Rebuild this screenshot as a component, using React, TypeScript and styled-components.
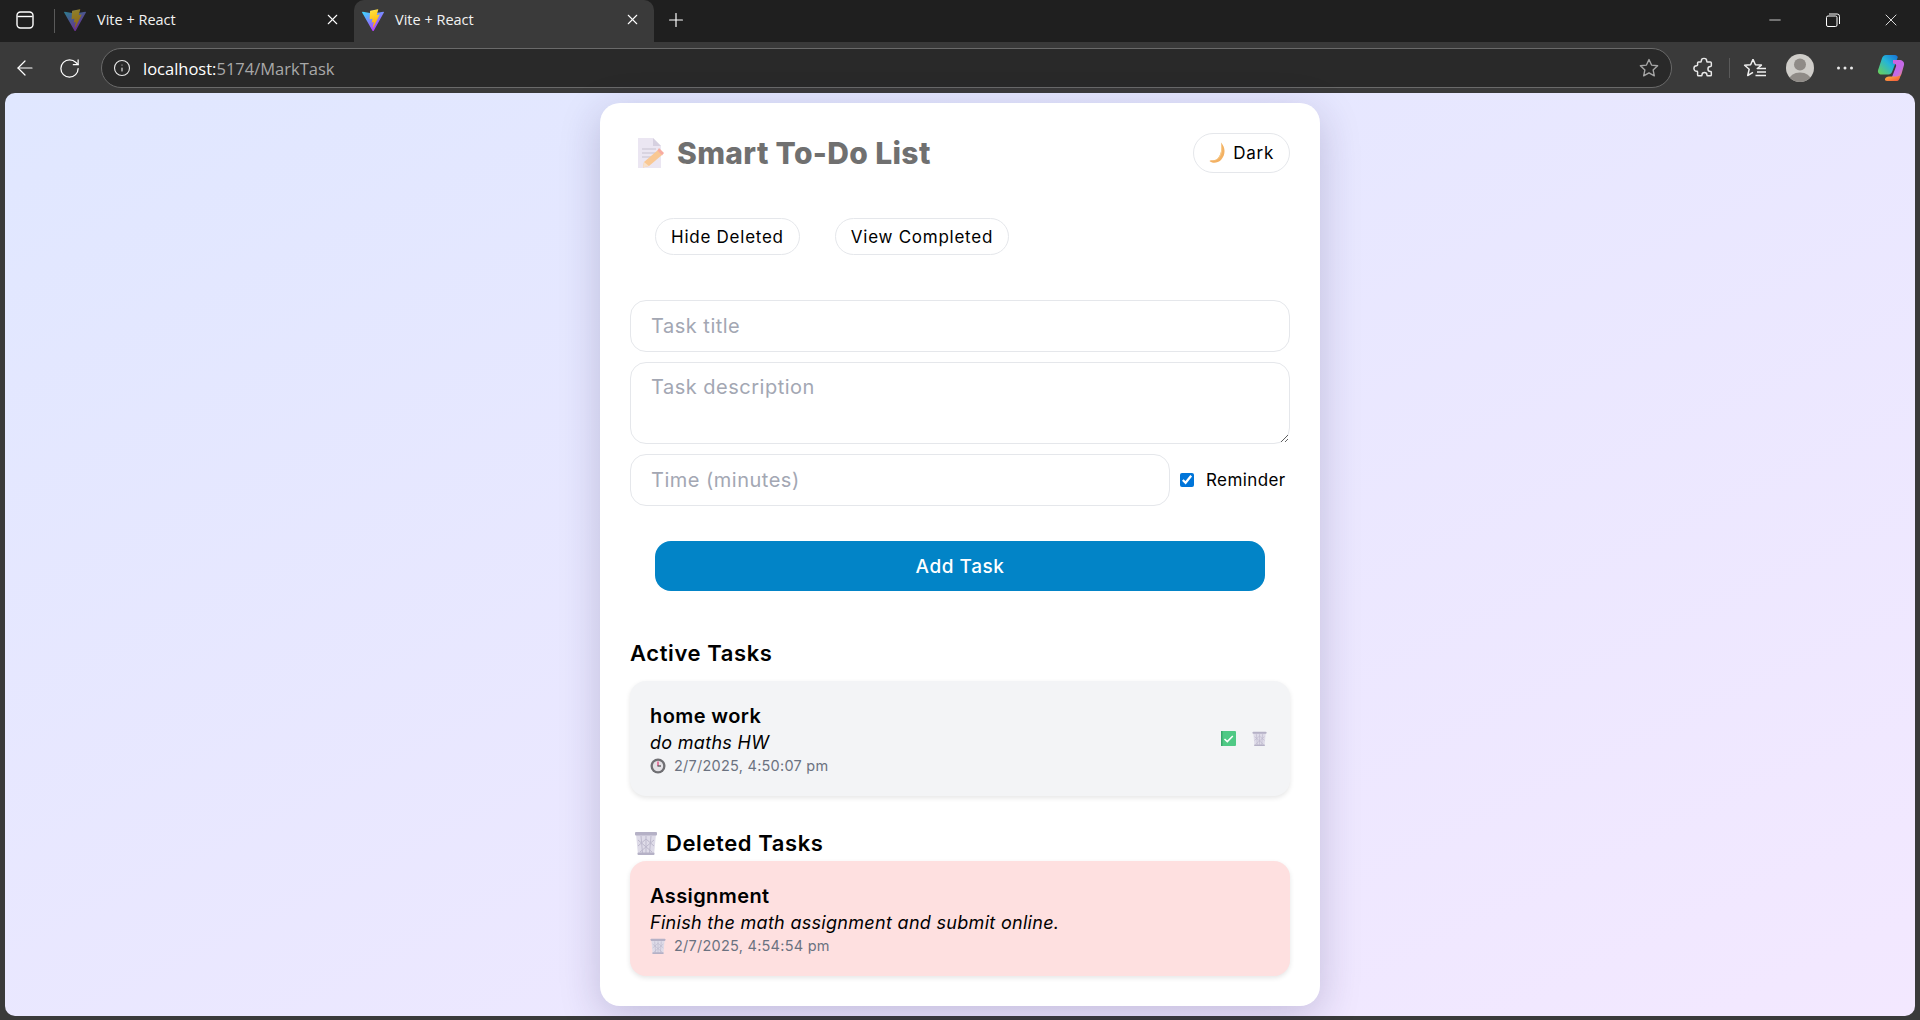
import React from "react";
import styled, { createGlobalStyle } from "styled-components";
import { ArrowLeft, RotateCw, Info, Plus, X, Minus } from "lucide-react";

const Global = createGlobalStyle`
  html, body { margin: 0; padding: 0; height: 100%; background: #3a3a3a; }
  #root { height: 100%; }
  * { box-sizing: border-box; }
`;

const UI = `"Inter", "Liberation Sans", sans-serif`;
const CHROME = `"Open Sans", "Liberation Sans", sans-serif`;

const Window = styled.div`
  width: 1920px;
  height: 1020px;
  display: flex;
  flex-direction: column;
  overflow: hidden;
  background: #3a3a3a;
  font-family: ${UI};
`;

const TabBar = styled.div`
  height: 42px;
  display: flex;
  align-items: stretch;
  background: #1f1f1f;
  color: #fff;
`;

const PanelButton = styled.div`
  width: 54px;
  display: flex;
  align-items: center;
  padding: 0 0 2px 15px;
`;

const Tab = styled.div<{ $active?: boolean }>`
  width: 300px;
  height: 42px;
  display: flex;
  align-items: center;
  gap: 11px;
  padding: 0 13px 3px ${(p) => (p.$active ? 8 : 9)}px;
  background: ${(p) => (p.$active ? "#3a3a3a" : "transparent")};
  border-radius: 10px 10px 0 0;
  border-left: ${(p) => (p.$active ? "none" : "1px solid transparent")};
`;

const Divider = styled.span`
  width: 1px;
  height: 24px;
  background: #5a5a5a;
  align-self: center;
  margin-right: -1px;
`;

const TabTitle = styled.span`
  flex: 1;
  font: 400 14.5px ${CHROME};
  color: #f2f2f2;
  white-space: nowrap;
`;

const NewTab = styled.div`
  width: 44px;
  display: flex;
  align-items: center;
  justify-content: center;
  padding-bottom: 2px;
`;

const Spacer = styled.div`
  flex: 1;
`;

const WindowButton = styled.div`
  width: 58px;
  display: flex;
  align-items: center;
  justify-content: center;
  padding-bottom: 2px;
`;

const Toolbar = styled.div`
  height: 51px;
  display: flex;
  align-items: center;
  padding: 1px 0 0 13px;
  background: #3a3a3a;
  color: #fff;
`;

const ToolIcon = styled.div<{ $w: number; $gap?: number }>`
  width: ${(p) => p.$w}px;
  height: 32px;
  margin-left: ${(p) => p.$gap ?? 0}px;
  display: flex;
  align-items: center;
  justify-content: center;
  flex: none;
`;

const Address = styled.div`
  width: 1571px;
  height: 40px;
  display: flex;
  align-items: center;
  padding: 0 11px 0 11px;
  background: #292929;
  border: 1px solid #6a6a6a;
  border-radius: 20px;
  flex: none;
`;

const Url = styled.div`
  flex: 1;
  margin-left: 12px;
  font: 400 16.5px ${CHROME};
  color: #a8a8a8;
  b {
    font-weight: 400;
    color: #fff;
  }
`;

const ToolSep = styled.span`
  width: 1px;
  height: 20px;
  background: #5a5a5a;
  margin: 0 8px;
  flex: none;
`;

const Viewport = styled.main`
  flex: 1;
  margin: 0 5px 4px;
  display: flex;
  justify-content: center;
  align-items: flex-start;
  padding-top: 10px;
  border-radius: 10px;
  background: linear-gradient(to bottom right, #e0e7ff, #f3e8ff);
`;

const Card = styled.section`
  width: 720px;
  padding: 30px;
  background: #fff;
  border-radius: 20px;
  box-shadow: 0 10px 40px rgba(40, 30, 90, 0.22);
`;

const Header = styled.header`
  height: 40px;
  display: flex;
  align-items: center;
  justify-content: space-between;
  margin-bottom: 45px;
`;

const Title = styled.h1`
  margin: 0;
  display: flex;
  align-items: center;
  gap: 12px;
  padding-left: 8px;
  font-size: 30px;
  font-weight: 800;
  color: #707070;
  letter-spacing: 0.35px;
`;

const Pill = styled.button<{ $h?: number }>`
  height: ${(p) => p.$h ?? 37}px;
  padding: 0 15px;
  display: inline-flex;
  align-items: center;
  gap: 7px;
  background: #fff;
  border: 1px solid #e5e7eb;
  border-radius: 20px;
  font: 400 17px ${UI};
  letter-spacing: 0.75px;
  color: #000;
`;

const Filters = styled.div`
  display: flex;
  gap: 35px;
  padding-left: 25px;
  margin-bottom: 45px;
`;

const Form = styled.form`
  display: flex;
  flex-direction: column;
  gap: 10px;
`;

const fieldCss = `
  display: block;
  width: 100%;
  padding: 0 20px;
  background: #fff;
  border: 1px solid #e5e7eb;
  border-radius: 16px;
  font: 400 20px ${UI};
  letter-spacing: 0.5px;
  color: #111;
  outline: none;
  &::placeholder { color: #a3a7b3; opacity: 1; }
`;

const Input = styled.input`
  ${fieldCss}
  height: 52px;
  flex: none;
`;

const TextArea = styled.textarea`
  ${fieldCss}
  height: 82px;
  padding-top: 12px;
  resize: vertical;
`;

const TimeRow = styled.div`
  display: flex;
  align-items: center;
  ${Input} {
    flex: 1;
    width: auto;
    min-width: 0;
  }
`;

const Reminder = styled.label`
  display: flex;
  align-items: center;
  flex: none;
  width: 120px;
  padding-left: 10px;
  font-size: 17px;
  letter-spacing: 0.4px;
  color: #000;
  white-space: nowrap;
`;

const Check = styled.input`
  width: 14px;
  height: 14px;
  margin: 0 12px 0 0;
  accent-color: #0075d9;
`;

const AddButton = styled.button`
  height: 50px;
  margin: 25px 25px 0;
  background: #0284c7;
  border: none;
  border-radius: 16px;
  color: #fff;
  font: 500 19px ${UI};
  letter-spacing: 0.55px;
`;

const SectionTitle = styled.h2<{ $top: number; $bottom: number }>`
  margin: ${(p) => p.$top}px 0 ${(p) => p.$bottom}px;
  height: 33px;
  display: flex;
  align-items: center;
  gap: 8px;
  padding-left: ${(p) => (p.$bottom < 5 ? 4 : 0)}px;
  font-size: 22px;
  font-weight: 600;
  letter-spacing: 0.6px;
  color: #000;
`;

const Task = styled.article<{ $deleted?: boolean }>`
  height: 115px;
  padding: 20px;
  display: flex;
  align-items: center;
  justify-content: space-between;
  background: ${(p) => (p.$deleted ? "#fee0e0" : "#f3f4f6")};
  border-radius: 16px;
  box-shadow: 0 2px 5px rgba(0, 0, 0, 0.1);
`;

const TaskText = styled.div`
  display: flex;
  flex-direction: column;
`;

const TaskName = styled.div`
  height: 30px;
  line-height: 30px;
  font-size: 20px;
  font-weight: 600;
  letter-spacing: 0.4px;
  color: #000;
`;

const TaskDesc = styled.div`
  height: 24px;
  line-height: 24px;
  font-size: 18px;
  font-style: italic;
  letter-spacing: 0.3px;
  color: #000;
`;

const TaskTime = styled.div`
  height: 21px;
  display: flex;
  align-items: center;
  gap: 8px;
  font-size: 14.5px;
  letter-spacing: 0.25px;
  color: #6b7280;
`;

const Actions = styled.div`
  display: flex;
  gap: 16px;
  padding-right: 3px;
`;

/* ---------- drawings ---------- */

const ViteLogo = ({ dim }: { dim?: boolean }) => (
  <svg width="22" height="22" viewBox="0 0 32 32" style={{ opacity: dim ? 0.5 : 1, flex: "none" }}>
    <defs>
      <linearGradient id="va" x1="0" y1="0.1" x2="0.6" y2="1">
        <stop offset="0" stopColor="#41d1ff" />
        <stop offset="1" stopColor="#bd34fe" />
      </linearGradient>
      <linearGradient id="vb" x1="0.4" y1="0" x2="0.6" y2="1">
        <stop offset="0" stopColor="#ffea83" />
        <stop offset="0.1" stopColor="#ffdd35" />
        <stop offset="1" stopColor="#ffa800" />
      </linearGradient>
    </defs>
    <path fill="url(#va)" d="M31.88 5.04 16.87 31.9c-.3.55-1.1.56-1.41.01L.17 5.04c-.34-.6.17-1.33.85-1.2l15.03 2.68c.1.02.2.02.29 0l14.71-2.68c.68-.12 1.2.6.83 1.2Z" />
    <path fill="url(#vb)" d="M23.2.38 12.1 2.55a.4.4 0 0 0-.32.37l-.68 11.52a.4.4 0 0 0 .49.41l3.09-.71a.4.4 0 0 1 .48.47l-.92 4.5a.4.4 0 0 0 .51.46l1.91-.58a.4.4 0 0 1 .51.46l-1.46 7.06c-.09.44.5.68.75.3l.16-.25 9.04-18.05a.4.4 0 0 0-.44-.58l-3.18.62a.4.4 0 0 1-.46-.51l2.08-7.2a.4.4 0 0 0-.46-.5Z" />
  </svg>
);

const PanelIcon = () => (
  <svg width="20" height="20" viewBox="0 0 20 20" fill="none" stroke="#fff" strokeWidth="1.4">
    <rect x="2" y="2" width="16" height="16" rx="3.5" />
    <path d="M2.5 6.5h15" />
  </svg>
);

const RestoreIcon = () => (
  <svg width="14" height="14" viewBox="0 0 14 14" fill="none" stroke="#fff" strokeWidth="1">
    <rect x="0.5" y="3" width="10.5" height="10.5" rx="1.5" />
    <path d="M3 1h8.2A2.3 2.3 0 0 1 13.5 3.3V11" />
  </svg>
);

const StarIcon = () => (
  <svg width="22" height="22" viewBox="0 0 24 24" fill="none" stroke="#a6a6a6" strokeWidth="1.5" strokeLinejoin="round" style={{ flex: "none" }}>
    <path d="m12 2.800 2.800 6 6.600.800-4.900 4.500 1.300 6.500-5.800-3.300-5.800 3.300 1.300-6.500L2.600 9.600l6.600-.8z" />
  </svg>
);

const PuzzleIcon = () => (
  <svg width="22" height="22" viewBox="0 0 24 24" fill="none" stroke="#e8e8e8" strokeWidth="1.6" strokeLinejoin="round">
    <path d="M9 4.500a3 3 0 0 1 6 0c0 .6.200 1 .800 1H19a1 1 0 0 1 1 1v3c0 .6-.5.800-1 .800a2.700 2.700 0 0 0 0 5.400c.5 0 1 .2 1 .8v3a1 1 0 0 1-1 1h-3c-.6 0-.8-.4-.8-.9a2.700 2.700 0 0 0-5.400 0c0 .5-.2.900-.8.900H6a1 1 0 0 1-1-1v-3.200c0-.6-.4-.8-1-.8a3 3 0 0 1 0-6c.6 0 1-.2 1-.8V6.500a1 1 0 0 1 1-1h2.200c.6 0 .8-.4.800-1Z" />
  </svg>
);

const FavoritesIcon = () => (
  <svg width="24" height="24" viewBox="0 0 24 24" fill="none" stroke="#f0f0f0" strokeWidth="1.5" strokeLinejoin="round">
    <path d="M10 3.200 12.400 8.800l6 .3-4.600 3.900M10 3.200 7.600 8.800l-6 .4 4.600 4-1.500 6.300L10 16.400" />
    <path d="M15 12.500h8M14 16h9M12.500 19.500H23" />
  </svg>
);

const Avatar = () => (
  <svg width="28" height="28" viewBox="0 0 28 28">
    <defs>
      <clipPath id="av">
        <circle cx="14" cy="14" r="14" />
      </clipPath>
    </defs>
    <circle cx="14" cy="14" r="14" fill="#cfcdc9" />
    <g clipPath="url(#av)" fill="#8f8b87">
      <circle cx="14" cy="10.500" r="6" />
      <ellipse cx="14" cy="26" rx="11" ry="7.500" />
    </g>
  </svg>
);

const Dots = () => (
  <svg width="18" height="4" viewBox="0 0 18 4" fill="#e8e8e8">
    <circle cx="2.500" cy="2" r="1.500" />
    <circle cx="9" cy="2" r="1.500" />
    <circle cx="15.500" cy="2" r="1.500" />
  </svg>
);

const Copilot = () => (
  <svg width="28" height="28" viewBox="0 0 28 28">
    <defs>
      <linearGradient id="c1" x1="0" y1="1" x2="1" y2="0">
        <stop offset="0" stopColor="#6fd24f" />
        <stop offset="0.55" stopColor="#25b5d8" />
        <stop offset="1" stopColor="#1670d8" />
      </linearGradient>
      <linearGradient id="c2" x1="0" y1="0" x2="1" y2="1">
        <stop offset="0" stopColor="#d45fe0" />
        <stop offset="0.6" stopColor="#c26be8" />
        <stop offset="1" stopColor="#f08a6a" />
      </linearGradient>
      <linearGradient id="c3" x1="0" y1="0" x2="1" y2="1">
        <stop offset="0" stopColor="#ffc23d" />
        <stop offset="1" stopColor="#f4513c" />
      </linearGradient>
    </defs>
    <path fill="url(#c1)" d="M9 1h9c1.500 0 2.400 1 2.800 2.200L15 18c-.6 1.600-1.600 2.500-3.400 2.500H4.500C2 20.500.4 18.600 1.100 16L5 4.300C5.600 2.300 7 1 9 1Z" />
    <path fill="url(#c2)" d="M16 6h6c3.500 0 5.600 2 5 5l-2.500 9c-.6 2-2 3-3.800 3H15l4-10.500c.7-1.900-.6-3-3-3Z" />
    <path fill="url(#c3)" d="M10 27h9c2 0 3-1 3.600-2.600l1.400-4c-.8 1.300-2 2-3.600 2H12c-2 0-3.500 1-4 2.600-.3 1 .6 2 2 2Z" />
  </svg>
);

const MemoIcon = () => (
  <svg width="27" height="30" viewBox="0 0 27 30" style={{ flex: "none" }}>
    <path fill="#ebe6f2" d="M0 0h15l8 8v22H0z" />
    <path fill="#d6d0e0" d="M15 0l8 8h-8z" />
    <path stroke="#d3cedc" strokeWidth="1.300" d="M4 11h14M4 15h14M4 19h9" />
    <path fill="#f9c893" d="M6 24 20 12l4 5-13 11-6 1.500z" />
    <path fill="#f8aca0" d="m21 10 5 5-2 2.500-4.500-5z" />
    <path fill="#f7e0ca" d="M6 24l5 4-6 1.500z" />
  </svg>
);

const MoonIcon = () => (
  <svg width="17" height="22" viewBox="0 0 17 22" style={{ flex: "none" }}>
    <path fill="#f3b163" d="M12 .5c4.500 5 5 12 0 17.500-3.500 3.500-9 3.500-11.500 1 .5-.8 1.200-1 2.200-.8 3 .4 5.500-.8 7-3.200C12 12 13 6.500 12 .5Z" />
    <path fill="#f8cd8d" d="M12 .5c2 5 1.500 11-1.500 15-2 2.500-4.500 3.500-7.800 3 3 .4 5.500-.8 7-3.200C12 12 13 6.500 12 .5Z" />
  </svg>
);

const TrashIcon = ({ size }: { size: number }) => (
  <svg width={size} height={size} viewBox="0 0 24 24" style={{ flex: "none" }}>
    <path fill="#dedbe8" d="M2 3h20l-2 21H4z" />
    <path stroke="#bdb9cd" strokeWidth="1" fill="none" d="M7 5l1.500 17M12 5v17M17 5l-1.500 17M4 9l14 12M20 9 6 21M4 15l8-7 8 7" />
    <rect x="1" y="1" width="22" height="3.500" rx="1" fill="#b5b1c6" />
    <rect x="3.500" y="21.500" width="17" height="2.500" rx="1" fill="#b5b1c6" />
  </svg>
);

const ClockIcon = () => (
  <svg width="16" height="16" viewBox="0 0 16 16" style={{ flex: "none" }}>
    <circle cx="8" cy="8" r="7.500" fill="#6f6f73" />
    <circle cx="8" cy="8" r="5.200" fill="#e4e2e6" />
    <path stroke="#e0447a" strokeWidth="1.300" d="M8 3.500V8" />
    <path stroke="#55555a" strokeWidth="1.300" d="M7.500 8h3.500" />
  </svg>
);

const CheckIcon = () => (
  <svg width="15" height="15" viewBox="0 0 15 15">
    <rect width="15" height="15" rx="1" fill="#4fc985" />
    <rect width="1.500" height="15" fill="#3aa86d" />
    <path d="m3.500 8 2.800 2.600 5.500-5.600" fill="none" stroke="#fff" strokeWidth="1.500" />
  </svg>
);

export default function App() {
  return (
    <>
      <Global />
      <Window>
        <TabBar>
          <PanelButton>
            <PanelIcon />
          </PanelButton>
          <Divider />
          <Tab>
            <ViteLogo dim />
            <TabTitle>Vite + React</TabTitle>
            <X size={17} strokeWidth={1.5} />
          </Tab>
          <Tab $active>
            <ViteLogo />
            <TabTitle>Vite + React</TabTitle>
            <X size={17} strokeWidth={1.5} />
          </Tab>
          <NewTab>
            <Plus size={22} strokeWidth={1.3} />
          </NewTab>
          <Spacer />
          <WindowButton>
            <Minus size={18} strokeWidth={1} />
          </WindowButton>
          <WindowButton>
            <RestoreIcon />
          </WindowButton>
          <WindowButton>
            <X size={20} strokeWidth={1} />
          </WindowButton>
        </TabBar>
        <Toolbar>
          <ToolIcon $w={24}>
            <ArrowLeft size={26} strokeWidth={1.2} />
          </ToolIcon>
          <ToolIcon $w={64}>
            <RotateCw size={23} strokeWidth={1.3} />
          </ToolIcon>
          <Address>
            <Info size={18} strokeWidth={1.5} color="#e8e8e8" />
            <Url>
              <b>localhost:</b>5174/MarkTask
            </Url>
            <StarIcon />
          </Address>
          <ToolIcon $w={34} $gap={15}>
            <PuzzleIcon />
          </ToolIcon>
          <ToolSep />
          <ToolIcon $w={34}>
            <FavoritesIcon />
          </ToolIcon>
          <ToolIcon $w={56}>
            <Avatar />
          </ToolIcon>
          <ToolIcon $w={34}>
            <Dots />
          </ToolIcon>
          <ToolIcon $w={58}>
            <Copilot />
          </ToolIcon>
        </Toolbar>
        <Viewport>
          <Card>
            <Header>
              <Title>
                <MemoIcon />
                Smart To-Do List
              </Title>
              <Pill $h={40}>
                <MoonIcon />
                Dark
              </Pill>
            </Header>
            <Filters>
              <Pill>Hide Deleted</Pill>
              <Pill>View Completed</Pill>
            </Filters>
            <Form>
              <Input placeholder="Task title" />
              <TextArea placeholder="Task description" />
              <TimeRow>
                <Input placeholder="Time (minutes)" />
                <Reminder>
                  <Check type="checkbox" defaultChecked />
                  Reminder
                </Reminder>
              </TimeRow>
              <AddButton type="button">Add Task</AddButton>
            </Form>
            <SectionTitle $top={45} $bottom={12}>
              Active Tasks
            </SectionTitle>
            <Task>
              <TaskText>
                <TaskName>home work</TaskName>
                <TaskDesc>do maths HW</TaskDesc>
                <TaskTime>
                  <ClockIcon />
                  2/7/2025, 4:50:07 pm
                </TaskTime>
              </TaskText>
              <Actions>
                <CheckIcon />
                <TrashIcon size={15} />
              </Actions>
            </Task>
            <SectionTitle $top={30} $bottom={2}>
              <TrashIcon size={24} />
              Deleted Tasks
            </SectionTitle>
            <Task $deleted>
              <TaskText>
                <TaskName>Assignment</TaskName>
                <TaskDesc>Finish the math assignment and submit online.</TaskDesc>
                <TaskTime>
                  <TrashIcon size={16} />
                  2/7/2025, 4:54:54 pm
                </TaskTime>
              </TaskText>
            </Task>
          </Card>
        </Viewport>
      </Window>
    </>
  );
}
